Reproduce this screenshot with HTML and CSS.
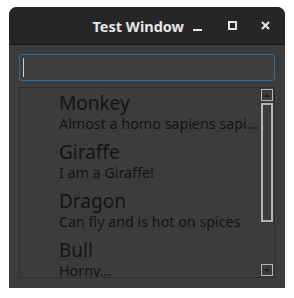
FILE: index.html
```html
<!DOCTYPE html>
<html lang="en">
<head>
    <meta charset="UTF-8">
    <meta name="viewport" content="width=device-width, initial-scale=1.0">
    <title>Test Window</title>
    <link rel="stylesheet" href="styles.css">
</head>
<body>
    <!-- main window -->
    <div class="window">
        <!-- title bar with window buttons -->
        <div class="titlebar">
            <span class="title">Test Window</span>
            <div class="controls">
                <span class="btn-min"></span>
                <span class="btn-max"></span>
                <svg class="btn-close" width="9" height="9" viewBox="0 0 9 9">
                    <path d="M1 1 L8 8 M8 1 L1 8" stroke="#e6e6e6" stroke-width="2"/>
                </svg>
            </div>
        </div>

        <div class="content">
            <!-- search entry -->
            <div class="entry"><span class="caret"></span></div>

            <!-- list of animals -->
            <div class="list">
                <div class="rows">
                    <div class="row">
                        <div class="name">Monkey</div>
                        <div class="desc">Almost a homo sapiens sapi…</div>
                    </div>
                    <div class="row">
                        <div class="name">Giraffe</div>
                        <div class="desc">I am a Giraffe!</div>
                    </div>
                    <div class="row">
                        <div class="name">Dragon</div>
                        <div class="desc">Can fly and is hot on spices</div>
                    </div>
                    <div class="row">
                        <div class="name">Bull</div>
                        <div class="desc">Horny…</div>
                    </div>
                </div>
                <!-- scrollbar -->
                <div class="scrollbar">
                    <div class="arrow up"><span></span></div>
                    <div class="thumb"></div>
                    <div class="arrow down"><span></span></div>
                </div>
            </div>
        </div>
    </div>
</body>
</html>
```

FILE: styles.css
```css
body {
    margin: 0;
    background: #ffffff;
    font-family: 'Noto Sans', 'Open Sans', sans-serif;
}

.window {
    margin: 7px 0 0 9px;
    width: 276px;
    height: 281px;
    border-radius: 8px 8px 0 0;
    overflow: hidden;
    background-color: #3c3c3c;
    display: flex;
    flex-direction: column;
}

.titlebar {
    height: 37px;
    background-color: #262626;
    border-bottom: 1px solid #141414;
    display: flex;
    align-items: center;
    justify-content: flex-end;
    flex-shrink: 0;
}

.title {
    color: #e6e6e6;
    font-weight: bold;
    font-size: 14.5px;
    margin-right: 9px;
}

.controls {
    display: flex;
    align-items: center;
    margin-right: 15px;
}

.btn-min {
    width: 9px;
    height: 2px;
    background-color: #e6e6e6;
    margin-top: 8px;
    margin-right: 26px;
}

.btn-max {
    width: 5px;
    height: 5px;
    border: 2px solid #e6e6e6;
    margin-right: 24px;
}

.content {
    flex: 1;
    min-height: 0;
    padding: 9px 10px 10px 10px;
    display: flex;
    flex-direction: column;
    gap: 6px;
}

.entry {
    height: 25px;
    flex-shrink: 0;
    border: 1px solid #2a6fa6;
    border-radius: 3px;
    background-color: #3e3e3e;
    display: flex;
    align-items: center;
    padding-left: 3px;
}

.caret {
    width: 1px;
    height: 19px;
    background-color: #d0d0d0;
}

.list {
    flex: 1;
    min-height: 0;
    border: 1px solid #2e2e2e;
    display: flex;
    overflow: hidden;
}

.rows {
    flex: 1;
    padding-left: 39px;
    overflow: hidden;
}

.row {
    height: 49px;
    color: #141414;
    white-space: nowrap;
}

.name {
    font-size: 19px;
    line-height: 24px;
    padding-top: 3px;
}

.desc {
    font-size: 14.3px;
    line-height: 18px;
}

.scrollbar {
    width: 12px;
    margin: 1px 1px 1px 0;
    display: flex;
    flex-direction: column;
    gap: 2px;
}

.arrow {
    height: 10px;
    border: 1px solid #b4b4b4;
    background-color: #3c3c3c;
    display: flex;
    align-items: center;
    justify-content: center;
}

.arrow span {
    width: 0;
    height: 0;
    border-left: 3px solid transparent;
    border-right: 3px solid transparent;
}

.up span {
    border-bottom: 3px solid #1a1a1a;
}

.down span {
    border-top: 3px solid #1a1a1a;
}

.thumb {
    height: 115px;
    border: 2px solid #b4b4b4;
    background-color: #3c3c3c;
}

.scrollbar .down {
    margin-top: auto;
}
```
